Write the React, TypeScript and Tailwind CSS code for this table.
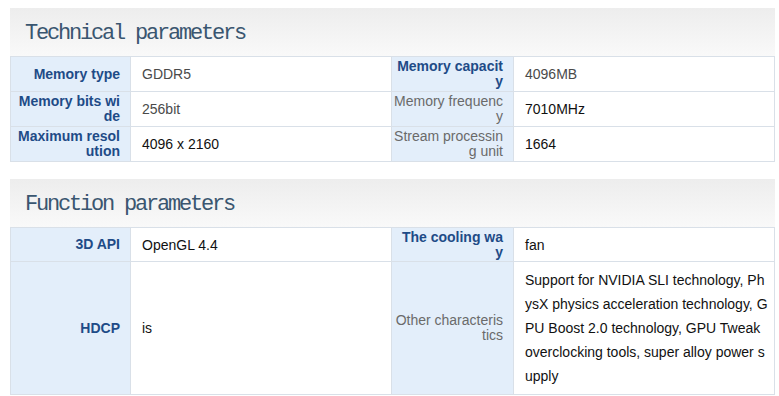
import { Fragment } from "react";

type Cell = {
  label: string[];
  strong: boolean;
  value: string[];
  dim?: boolean;
};

type Row = [Cell, Cell];

const technical: Row[] = [
  [
    { label: ["Memory type"], strong: true, value: ["GDDR5"], dim: true },
    { label: ["Memory capacit", "y"], strong: true, value: ["4096MB"], dim: true },
  ],
  [
    { label: ["Memory bits wi", "de"], strong: true, value: ["256bit"], dim: true },
    { label: ["Memory frequenc", "y"], strong: false, value: ["7010MHz"] },
  ],
  [
    { label: ["Maximum resol", "ution"], strong: true, value: ["4096 x 2160"] },
    { label: ["Stream processin", "g unit"], strong: false, value: ["1664"] },
  ],
];

const functional: Row[] = [
  [
    { label: ["3D API"], strong: true, value: ["OpenGL 4.4"] },
    { label: ["The cooling wa", "y"], strong: true, value: ["fan"] },
  ],
  [
    { label: ["HDCP"], strong: true, value: ["is"] },
    {
      label: ["Other characteris", "tics"],
      strong: false,
      value: [
        "Support for NVIDIA SLI technology, Ph",
        "ysX physics acceleration technology, G",
        "PU Boost 2.0 technology, GPU Tweak",
        "overclocking tools, super alloy power s",
        "upply",
      ],
    },
  ],
];

function Lines({ lines }: { lines: string[] }) {
  return (
    <>
      {lines.map((l, i) => (
        <span key={i} className="block whitespace-nowrap">
          {l}
        </span>
      ))}
    </>
  );
}

function ParamPanel({
  title,
  rows,
  heights,
}: {
  title: string;
  rows: Row[];
  heights: string[];
}) {
  return (
    <section>
      {/* Header */}
      <div className="h-[48px] flex items-center pl-[15px] pt-[3px] bg-gradient-to-b from-[#ededed] to-[#f9f9f9]">
        <h2 className="font-[family-name:Courier_New,Liberation_Mono,monospace] text-[22px] tracking-[-2.2px] text-[#3a5670] leading-none">
          {title}
        </h2>
      </div>

      {/* Table */}
      <table className="w-full table-fixed border-collapse font-[family-name:Liberation_Sans,Arial,sans-serif] text-[14px]">
        <colgroup>
          <col className="w-[120px]" />
          <col className="w-[261px]" />
          <col className="w-[122px]" />
          <col />
        </colgroup>
        <tbody>
          {rows.map((row, r) => (
            <tr key={r} className={heights[r]}>
              {row.map((cell, c) => (
                <Fragment key={c}>
                  <td
                    className={`border border-[#d9e0e8] bg-[#e3eefa] text-right align-middle pr-[10px] pl-[2px] leading-[15px] ${
                      cell.strong
                        ? "font-bold text-[#1e4b87]"
                        : "text-[#6a6a6a]"
                    }`}
                  >
                    <Lines lines={cell.label} />
                  </td>
                  <td
                    className={`border border-[#d9e0e8] bg-white align-middle pl-[11px] ${
                      cell.value.length > 1 ? "leading-[24px] py-[6px]" : "leading-[16px]"
                    } ${cell.dim ? "text-[#4a4a4a]" : "text-[#111111]"}`}
                  >
                    <Lines lines={cell.value} />
                  </td>
                </Fragment>
              ))}
            </tr>
          ))}
        </tbody>
      </table>
    </section>
  );
}

export default function App() {
  return (
    <div className="w-[779px] h-[396px] bg-white pt-[8px] pl-[10px] pr-[4px] overflow-hidden">
      <div className="flex flex-col gap-[17px]">
        <ParamPanel
          title="Technical parameters"
          rows={technical}
          heights={["h-[35px]", "h-[35px]", "h-[35px]"]}
        />
        <ParamPanel
          title="Function parameters"
          rows={functional}
          heights={["h-[34px]", "h-[131px]"]}
        />
      </div>
    </div>
  );
}
